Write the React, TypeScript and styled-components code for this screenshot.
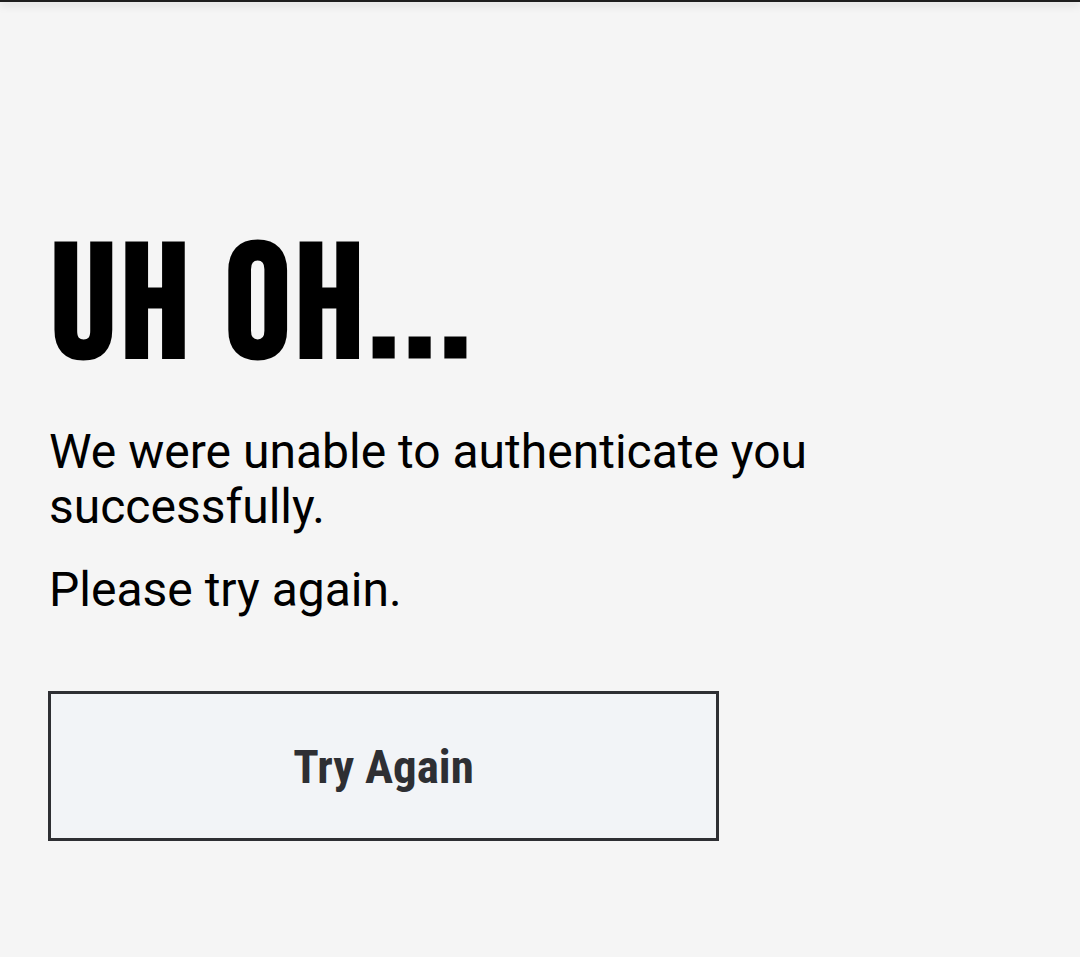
import styled, { createGlobalStyle } from "styled-components";

const GlobalStyle = createGlobalStyle`
  html, body {
    margin: 0;
    padding: 0;
    background: #f5f5f5;
  }
  body {
    font-family: Roboto, "Liberation Sans", sans-serif;
    color: #000;
  }
`;

const Page = styled.div`
  min-height: 957px;
  background: #f5f5f5;
  box-sizing: border-box;
`;

const TopEdge = styled.div`
  height: 2px;
  background: #1e1e1e;
  box-shadow: 0 2px 8px rgba(0, 0, 0, 0.25);
`;

const Content = styled.main`
  padding: 225px 48px 0 48px;
`;

const Heading = styled.h1`
  margin: 0 0 36px;
  padding-left: 3px;
  font-family: "Bebas Neue", "Roboto Condensed", sans-serif;
  font-weight: 400;
  font-size: 161px;
  line-height: 1;
  letter-spacing: 5.5px;
  -webkit-text-stroke: 5px #000;
`;

const Message = styled.p`
  margin: 0 0 28px;
  max-width: 800px;
  font-size: 48px;
  line-height: 55px;
  padding-left: 1px;
`;

const RetryButton = styled.button`
  display: flex;
  align-items: center;
  justify-content: center;
  margin-top: 74px;
  width: 671px;
  height: 150px;
  border: 3px solid #2e2f33;
  border-radius: 0;
  background: #f2f4f7;
  color: #2e2f33;
  font-family: "Roboto Condensed", Roboto, sans-serif;
  font-weight: 700;
  font-size: 47px;
  cursor: pointer;
`;

export default function App() {
  return (
    <Page>
      <GlobalStyle />
      <TopEdge />
      <Content>
        <Heading>UH OH...</Heading>
        <Message>We were unable to authenticate you successfully.</Message>
        <Message>Please try again.</Message>
        <RetryButton type="button">Try Again</RetryButton>
      </Content>
    </Page>
  );
}
